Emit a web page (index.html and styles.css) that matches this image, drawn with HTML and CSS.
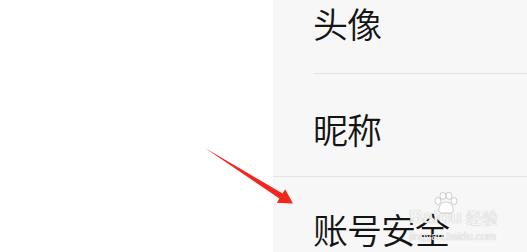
FILE: index.html
```html
<!DOCTYPE html>
<html lang="zh">
<head>
<meta charset="utf-8">
<link rel="stylesheet" href="styles.css">
</head>
<body>
<div class="screen">
  <div class="blank"></div>
  <div class="panel">
    <div class="row row-first"><span class="label">头像</span></div>
    <div class="row row-second"><span class="label">昵称</span></div>
    <div class="row row-third"><span class="label">账号安全</span></div>
  </div>
  <svg class="arrow" width="527" height="252" viewBox="0 0 527 252">
    <polygon points="205,148 282.6,193.5 285.2,189.2 293,203.5 276.8,202.8 279.4,198.6" fill="#f3261e"/>
  </svg>
  <div class="watermark">
    <div class="wm-top">
      <span class="wm-b">Bai</span><span class="wm-b">du</span>
      <span class="wm-cn">经验</span>
    </div>
    <svg class="paw" width="26" height="22" viewBox="0 0 26 22">
      <ellipse cx="5" cy="9" rx="3" ry="3.6" />
      <ellipse cx="10" cy="3.8" rx="3" ry="3.6" />
      <ellipse cx="16" cy="3.8" rx="3" ry="3.6" />
      <ellipse cx="21" cy="9" rx="3" ry="3.6" />
      <path d="M13 10 C8 10 5 16 6 19 C7 22 11 21 13 21 C15 21 19 22 20 19 C21 16 18 10 13 10 Z" />
    </svg>
    <div class="wm-url">jingyan.baidu.com</div>
  </div>
</div>
</body>
</html>
```
FILE: styles.css
```css
html, body {
  margin: 0;
  padding: 0;
  background: #ffffff;
}
.screen {
  position: relative;
  width: 527px;
  height: 252px;
  display: flex;
  overflow: hidden;
  font-family: "Noto Sans CJK SC", "Noto Sans", sans-serif;
}
.blank {
  width: 273px;
  flex: none;
  background: #ffffff;
}
.panel {
  flex: 1;
  background: #f7f7f7;
  display: flex;
  flex-direction: column;
}
.row {
  height: 102px;
  flex: none;
  display: flex;
  align-items: center;
  box-sizing: content-box;
}
.row-first {
  margin-top: -29px;
  margin-left: 40px;
  border-bottom: 1px solid #e3e3e3;
}
.row-second {
  padding-left: 40px;
  padding-top: 6px;
  height: 96px;
  border-bottom: 1px solid #e3e3e3;
}
.row-third {
  padding-left: 40px;
}
.label {
  font-size: 35px;
  font-weight: 350;
  color: #141414;
  line-height: 1;
  letter-spacing: -1px;
}
.arrow {
  position: absolute;
  left: 0;
  top: 0;
}
.watermark {
  position: absolute;
  left: 409px;
  top: 207px;
  width: 100px;
  white-space: nowrap;
  color: rgba(255, 255, 255, 0.85);
  text-shadow: 0 0 1px rgba(150, 150, 150, 0.8);
  font-family: "Liberation Sans", sans-serif;
}
.wm-top {
  display: flex;
  align-items: flex-end;
  height: 20px;
}
.wm-b {
  font-size: 19px;
  font-weight: bold;
  line-height: 20px;
}
.paw {
  position: absolute;
  left: 24px;
  top: -15px;
  fill: rgba(255, 255, 255, 0.85);
  stroke: rgba(160, 160, 160, 0.7);
  stroke-width: 0.7;
}
.wm-cn {
  font-family: "Noto Sans CJK SC", sans-serif;
  font-size: 16px;
  line-height: 20px;
  margin-left: 4px;
}
.wm-url {
  font-size: 10.8px;
  line-height: 12px;
  margin-top: 3px;
}
```
